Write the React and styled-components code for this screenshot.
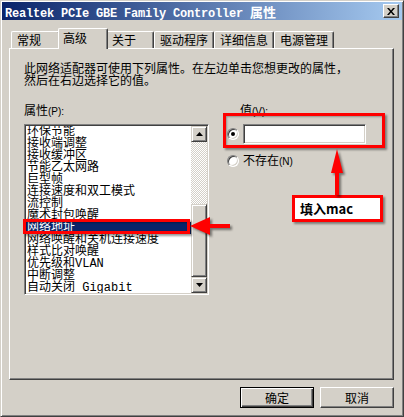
import React from 'react'
import styled, { createGlobalStyle } from 'styled-components'

const GlobalStyle = createGlobalStyle`
  html, body {
    margin: 0;
    padding: 0;
    background: #fff;
  }
  body {
    font-family: "Noto Sans CJK SC", sans-serif;
    font-size: 12px;
    color: #000;
  }
`

const Window = styled.div`
  position: relative;
  box-sizing: border-box;
  width: 404px;
  height: 417px;
  background: #d4d0c8;
  border: 1px solid;
  border-color: #d4d0c8 #404040 #404040 #d4d0c8;
  box-shadow: inset 1px 1px #fff, inset -1px -1px #808080;
  display: flex;
  flex-direction: column;
  overflow: hidden;
`

const TitleBar = styled.div`
  margin: 1px 1px 0;
  height: 18px;
  padding: 0 3px;
  display: flex;
  align-items: center;
  justify-content: space-between;
  background: linear-gradient(to right, #0a246a, #a6caf0);
`

const Title = styled.span`
  color: #fff;
  font-family: "Liberation Mono", monospace;
  font-weight: bold;
  font-size: 12px;
  letter-spacing: -0.2px;
  white-space: pre;
`

const TitleCjk = styled.span`
  font-family: "Noto Sans CJK SC", sans-serif;
  font-size: 13px;
  letter-spacing: 0;
`

const Raised = styled.div`
  box-sizing: border-box;
  background: #d4d0c8;
  border: 1px solid;
  border-color: #fff #404040 #404040 #fff;
  box-shadow: inset -1px -1px #808080;
`

const CloseButton = styled(Raised)`
  width: 16px;
  height: 14px;
  display: flex;
  align-items: center;
  justify-content: center;
`

const TabStrip = styled.div`
  position: relative;
  z-index: 1;
  display: flex;
  align-items: flex-end;
  height: 20px;
  margin: 8px 0 0 10px;
`

const Tab = styled.div`
  position: relative;
  z-index: ${p => (p.$active ? 2 : 1)};
  box-sizing: border-box;
  width: ${p => p.$w}px;
  height: ${p => (p.$active ? 21 : 17)}px;
  margin: 0 ${p => (p.$active ? -2 : 0)}px ${p => (p.$active ? -1 : 0)}px;
  padding: ${p => (p.$active ? '3px 0 0 4px' : '2px 0 0 5px')};
  background: #d4d0c8;
  border: 1px solid;
  border-bottom: none;
  border-color: #fff #404040 #404040 #fff;
  border-radius: 2px 2px 0 0;
  box-shadow: inset -1px 0 #808080;
  line-height: 12px;
  white-space: nowrap;
`

const Panel = styled.div`
  position: relative;
  box-sizing: border-box;
  margin-left: 8px;
  width: 385px;
  height: 332px;
  padding: 13px 14px 0;
  border: 1px solid;
  border-color: #fff #404040 #404040 #fff;
  box-shadow: inset -1px -1px #808080;
`

const Description = styled.p`
  margin: 0;
  line-height: 12px;
  white-space: nowrap;
`

const Columns = styled.div`
  display: flex;
  margin-top: 18px;
`

const LeftCol = styled.div`
  width: 185px;
  display: flex;
  flex-direction: column;
`

const FieldLabel = styled.div`
  line-height: 12px;
  padding-left: ${p => p.$indent || 0}px;
`

const Mnemonic = styled.span`
  font-family: "Liberation Sans", sans-serif;
  font-size: 10px;
`

const ListBox = styled.div`
  box-sizing: border-box;
  margin-top: 6px;
  width: 185px;
  height: 171px;
  padding: 1px;
  display: flex;
  background: #fff;
  border: 1px solid;
  border-color: #808080 #fff #fff #808080;
  box-shadow: inset 1px 1px #404040, inset -1px -1px #d4d0c8;
`

const Items = styled.div`
  flex: 1;
  overflow: hidden;
`

const Item = styled.div`
  height: 12px;
  line-height: 12px;
  padding-left: 1px;
  white-space: nowrap;
  font-family: "Liberation Mono", "Noto Sans CJK SC", monospace;
  background: ${p => (p.$selected ? '#0a246a' : 'transparent')};
  color: ${p => (p.$selected ? '#fff' : '#000')};
`

const ScrollBar = styled.div`
  width: 16px;
  display: flex;
  flex-direction: column;
`

const ScrollButton = styled.div`
  box-sizing: border-box;
  height: 16px;
  display: flex;
  align-items: center;
  justify-content: center;
  background: #d4d0c8;
  border: 1px solid;
  border-color: #d4d0c8 #404040 #404040 #d4d0c8;
  box-shadow: inset 1px 1px #fff, inset -1px -1px #808080;
`

const Track = styled.div`
  flex: 1;
  display: flex;
  flex-direction: column;
  justify-content: flex-end;
  background: repeating-conic-gradient(#fff 0 25%, #d4d0c8 0 50%) 0 0 / 2px 2px;
`

const Thumb = styled(ScrollButton)`
  height: 73px;
`

const RightCol = styled.div`
  margin-left: 18px;
  display: flex;
  flex-direction: column;
`

const RadioRow = styled.div`
  display: flex;
  align-items: center;
  gap: 4px;
  height: ${p => p.$h}px;
  margin-top: ${p => p.$top}px;
  line-height: 12px;
`

const Radio = styled.div`
  box-sizing: border-box;
  width: 12px;
  height: 12px;
  border-radius: 50%;
  background: #fff;
  border: 1px solid;
  border-color: #808080 #fff #fff #808080;
  box-shadow: inset 1px 1px #404040, inset -1px -1px #d4d0c8;
  display: flex;
  align-items: center;
  justify-content: center;
  &::after {
    content: '';
    display: ${p => (p.$checked ? 'block' : 'none')};
    width: 4px;
    height: 4px;
    border-radius: 50%;
    background: #000;
  }
`

const TextInput = styled.div`
  box-sizing: border-box;
  width: 123px;
  height: 20px;
  background: #fff;
  border: 1px solid;
  border-color: #808080 #fff #fff #808080;
  box-shadow: inset 1px 1px #404040, inset -1px -1px #d4d0c8;
`

const Footer = styled.div`
  display: flex;
  justify-content: flex-end;
  gap: 6px;
  margin: 7px 9px 0 0;
`

const Button = styled.div`
  box-sizing: border-box;
  width: 74px;
  height: 21px;
  display: flex;
  align-items: center;
  justify-content: center;
  background: #d4d0c8;
  border: 1px solid;
  border-color: ${p => (p.$default ? '#000' : '#fff #404040 #404040 #fff')};
  box-shadow: ${p =>
    p.$default
      ? 'inset 1px 1px #fff, inset -1px -1px #404040, inset -2px -2px #808080'
      : 'inset -1px -1px #808080'};
`

const RedBox = styled.div`
  position: absolute;
  box-sizing: border-box;
  left: ${p => p.$x - 1}px;
  top: ${p => p.$y - 1}px;
  width: ${p => p.$w}px;
  height: ${p => p.$h}px;
  border: 3px solid #ff0000;
  box-shadow: 2px 2px 2px rgba(0, 0, 0, 0.4), inset 1px 1px 2px rgba(0, 0, 0, 0.3);
  pointer-events: none;
`

const Callout = styled(RedBox)`
  background: #fff;
  padding-left: 5px;
  display: flex;
  align-items: center;
  font-weight: bold;
  font-size: 13px;
  box-shadow: 2px 2px 2px rgba(0, 0, 0, 0.4);
`

const Arrows = styled.svg`
  position: absolute;
  left: -1px;
  top: -1px;
  pointer-events: none;
  filter: drop-shadow(2px 2px 1px rgba(0, 0, 0, 0.45));
`

const tabs = [
  { label: '常规', w: 49 },
  { label: '高级', w: 50, active: true },
  { label: '关于', w: 48 },
  { label: '驱动程序', w: 60 },
  { label: '详细信息', w: 60 },
  { label: '电源管理', w: 60 },
]

const properties = [
  '环保节能',
  '接收端调整',
  '接收缓冲区',
  '节能乙太网路',
  '巨型帧',
  '连接速度和双工模式',
  '流控制',
  '魔术封包唤醒',
  '网络地址',
  '网络唤醒和关机连接速度',
  '样式比对唤醒',
  '优先级和VLAN',
  '中断调整',
  '自动关闭 Gigabit',
]

function App() {
  return (
    <>
      <GlobalStyle />
      <Window>
        <TitleBar>
          <Title>
            Realtek PCIe GBE Family Controller <TitleCjk>属性</TitleCjk>
          </Title>
          <CloseButton>
            <svg width="8" height="7" viewBox="0 0 8 7">
              <path d="M0 0h2l2 2.5L6 0h2L5 3.5 8 7H6L4 4.5 2 7H0l3-3.5z" fill="#000" />
            </svg>
          </CloseButton>
        </TitleBar>

        <TabStrip>
          {tabs.map(t => (
            <Tab key={t.label} $w={t.w} $active={t.active}>
              {t.label}
            </Tab>
          ))}
        </TabStrip>

        <Panel>
          <Description>
            此网络适配器可使用下列属性。在左边单击您想更改的属性，
            <br />
            然后在右边选择它的值。
          </Description>

          <Columns>
            <LeftCol>
              <FieldLabel>
                属性<Mnemonic>(P):</Mnemonic>
              </FieldLabel>
              <ListBox>
                <Items>
                  {properties.map(p => (
                    <Item key={p} $selected={p === '网络地址'}>
                      {p}
                    </Item>
                  ))}
                </Items>
                <ScrollBar>
                  <ScrollButton>
                    <svg width="7" height="4" viewBox="0 0 7 4">
                      <path d="M3.5 0L7 4H0z" fill="#000" />
                    </svg>
                  </ScrollButton>
                  <Track>
                    <Thumb />
                  </Track>
                  <ScrollButton>
                    <svg width="7" height="4" viewBox="0 0 7 4">
                      <path d="M0 0h7L3.5 4z" fill="#000" />
                    </svg>
                  </ScrollButton>
                </ScrollBar>
              </ListBox>
            </LeftCol>

            <RightCol>
              <FieldLabel $indent={13}>
                值<Mnemonic>(V):</Mnemonic>
              </FieldLabel>
              <RadioRow $h={20} $top={6}>
                <Radio $checked />
                <TextInput />
              </RadioRow>
              <RadioRow $h={12} $top={11}>
                <Radio />
                <span>
                  不存在<Mnemonic>(N)</Mnemonic>
                </span>
              </RadioRow>
            </RightCol>
          </Columns>
        </Panel>

        <Footer>
          <Button $default>确定</Button>
          <Button>取消</Button>
        </Footer>

        <RedBox $x={23} $y={219} $w={167} $h={15} />
        <RedBox $x={223} $y={113} $w={162} $h={35} />
        <Callout $x={292} $y={195} $w={91} $h={27}>
          填入mac
        </Callout>
        <Arrows width="404" height="417" viewBox="0 0 404 417">
          <path d="M337 149L343 173H339V195H335V173H331z" fill="#ff0000" />
          <path d="M190 226L210 217V224H230V228H210V235z" fill="#ff0000" />
        </Arrows>
      </Window>
    </>
  )
}

export default App
